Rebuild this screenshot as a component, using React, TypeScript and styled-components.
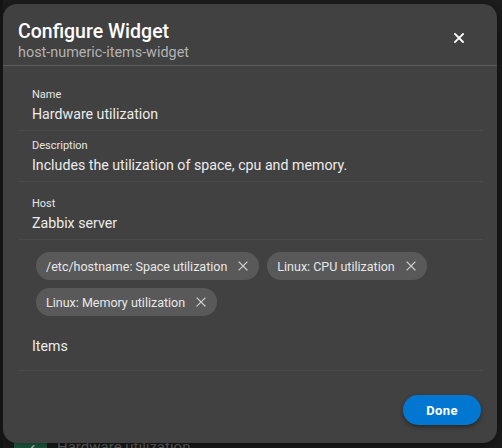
import React from "react";
import styled, { createGlobalStyle } from "styled-components";

const GlobalStyle = createGlobalStyle`
  html, body {
    margin: 0;
    padding: 0;
    background: #1d1d1d;
    font-family: Roboto, "Liberation Sans", sans-serif;
    overflow: hidden;
  }
`;

const Screen = styled.div`
  position: relative;
  width: 502px;
  height: 448px;
  background: #1d1d1d;
  overflow: hidden;
  border-left: 3px solid #141414;
  box-sizing: border-box;
`;

const BehindRow = styled.div`
  position: absolute;
  left: 11px;
  top: 437px;
  display: flex;
  align-items: flex-start;
  gap: 10px;
`;

const BehindIcon = styled.div`
  width: 33px;
  height: 30px;
  border-radius: 3px;
  background: #23664a;
  color: #cfe9dc;
  font-size: 16px;
  display: flex;
  justify-content: center;
  padding-top: 3px;
  box-sizing: border-box;
`;

const BehindText = styled.span`
  font-size: 15px;
  line-height: 18px;
  color: #6f6f6f;
  margin-top: 1px;
`;

const Dialog = styled.div`
  position: absolute;
  left: 0;
  top: 4px;
  width: 494px;
  height: 439px;
  background: #414141;
  border-radius: 14px;
  box-shadow: 0 4px 14px rgba(0, 0, 0, 0.5);
  display: flex;
  flex-direction: column;
  box-sizing: border-box;
  z-index: 1;
`;

const Header = styled.div`
  display: flex;
  align-items: center;
  justify-content: space-between;
  padding: 13px 33px 0 15px;
  height: 62px;
  box-sizing: border-box;
  border-bottom: 1px solid #5c5c5c;
`;

const Titles = styled.div`
  display: flex;
  flex-direction: column;
`;

const Title = styled.h2`
  margin: 0;
  font-size: 19.5px;
  font-weight: 500;
  color: #ffffff;
  line-height: 24px;
`;

const Subtitle = styled.div`
  font-size: 14.4px;
  color: #b3b3b3;
  line-height: 18px;
`;

const CloseButton = styled.button`
  background: none;
  border: none;
  padding: 0;
  margin-top: -7px;
  color: #ffffff;
  display: flex;
  cursor: pointer;
`;

const Body = styled.div`
  padding: 17px 14px 0 15px;
  display: flex;
  flex-direction: column;
`;

const Field = styled.div<{ $gap?: number }>`
  padding: ${(p) => p.$gap ?? 6}px 14px 6px;
  border-bottom: 1px solid #4a4a4a;
  display: flex;
  flex-direction: column;
`;

const Label = styled.div`
  font-size: 11px;
  color: #e6e6e6;
  line-height: 14px;
`;

const Value = styled.div`
  font-size: 14.2px;
  color: #ececec;
  line-height: 20px;
  margin-top: 2px;
`;

const ChipArea = styled.div`
  padding: 12px 14px 14px 18px;
  border-bottom: 1px solid #4a4a4a;
  display: flex;
  flex-direction: column;
`;

const ChipList = styled.div`
  display: flex;
  flex-wrap: wrap;
  gap: 8px;
`;

const Chip = styled.div`
  display: inline-flex;
  align-items: center;
  height: 28px;
  padding: 0 11px 0 10px;
  border-radius: 14px;
  background: #595959;
  font-size: 12.5px;
  color: #e8e8e8;
  gap: 11px;
`;

const ChipClose = styled.span`
  display: flex;
  color: #cfcfcf;
`;

const ItemsLabel = styled.div`
  margin-top: 20px;
  margin-left: -4px;
  font-size: 14.2px;
  line-height: 20px;
  color: #ececec;
`;

const Footer = styled.div`
  display: flex;
  justify-content: flex-end;
  padding: 24px 16px 0;
`;

const DoneButton = styled.button`
  width: 78px;
  height: 30px;
  border: none;
  border-radius: 15px;
  background: #0277d2;
  color: #ffffff;
  font-family: Roboto, "Liberation Sans", sans-serif;
  font-size: 13px;
  font-weight: 700;
  letter-spacing: 0.4px;
  box-shadow: 0 2px 4px rgba(0, 0, 0, 0.4);
  cursor: pointer;
`;

function XIcon({ size, stroke }: { size: number; stroke: number }) {
  return (
    <svg width={size} height={size} viewBox="0 0 10 10" fill="none">
      <path
        d="M1 1 L9 9 M9 1 L1 9"
        stroke="currentColor"
        strokeWidth={stroke}
        strokeLinecap="square"
      />
    </svg>
  );
}

const items = [
  "/etc/hostname: Space utilization",
  "Linux: CPU utilization",
  "Linux: Memory utilization",
];

export default function App() {
  return (
    <>
      <GlobalStyle />
      <Screen>
        <BehindRow>
          <BehindIcon>✓</BehindIcon>
          <BehindText>Hardware utilization</BehindText>
        </BehindRow>
        <Dialog>
          <Header>
            <Titles>
              <Title>Configure Widget</Title>
              <Subtitle>host-numeric-items-widget</Subtitle>
            </Titles>
            <CloseButton aria-label="Close">
              <XIcon size={10} stroke={1.8} />
            </CloseButton>
          </Header>
          <Body>
            <Field $gap={5}>
              <Label>Name</Label>
              <Value>Hardware utilization</Value>
            </Field>
            <Field $gap={8}>
              <Label>Description</Label>
              <Value>Includes the utilization of space, cpu and memory.</Value>
            </Field>
            <Field $gap={15}>
              <Label>Host</Label>
              <Value>Zabbix server</Value>
            </Field>
            <ChipArea>
              <ChipList>
                {items.map((item) => (
                  <Chip key={item}>
                    {item}
                    <ChipClose>
                      <XIcon size={10} stroke={1.1} />
                    </ChipClose>
                  </Chip>
                ))}
              </ChipList>
              <ItemsLabel>Items</ItemsLabel>
            </ChipArea>
          </Body>
          <Footer>
            <DoneButton>Done</DoneButton>
          </Footer>
        </Dialog>
      </Screen>
    </>
  );
}
